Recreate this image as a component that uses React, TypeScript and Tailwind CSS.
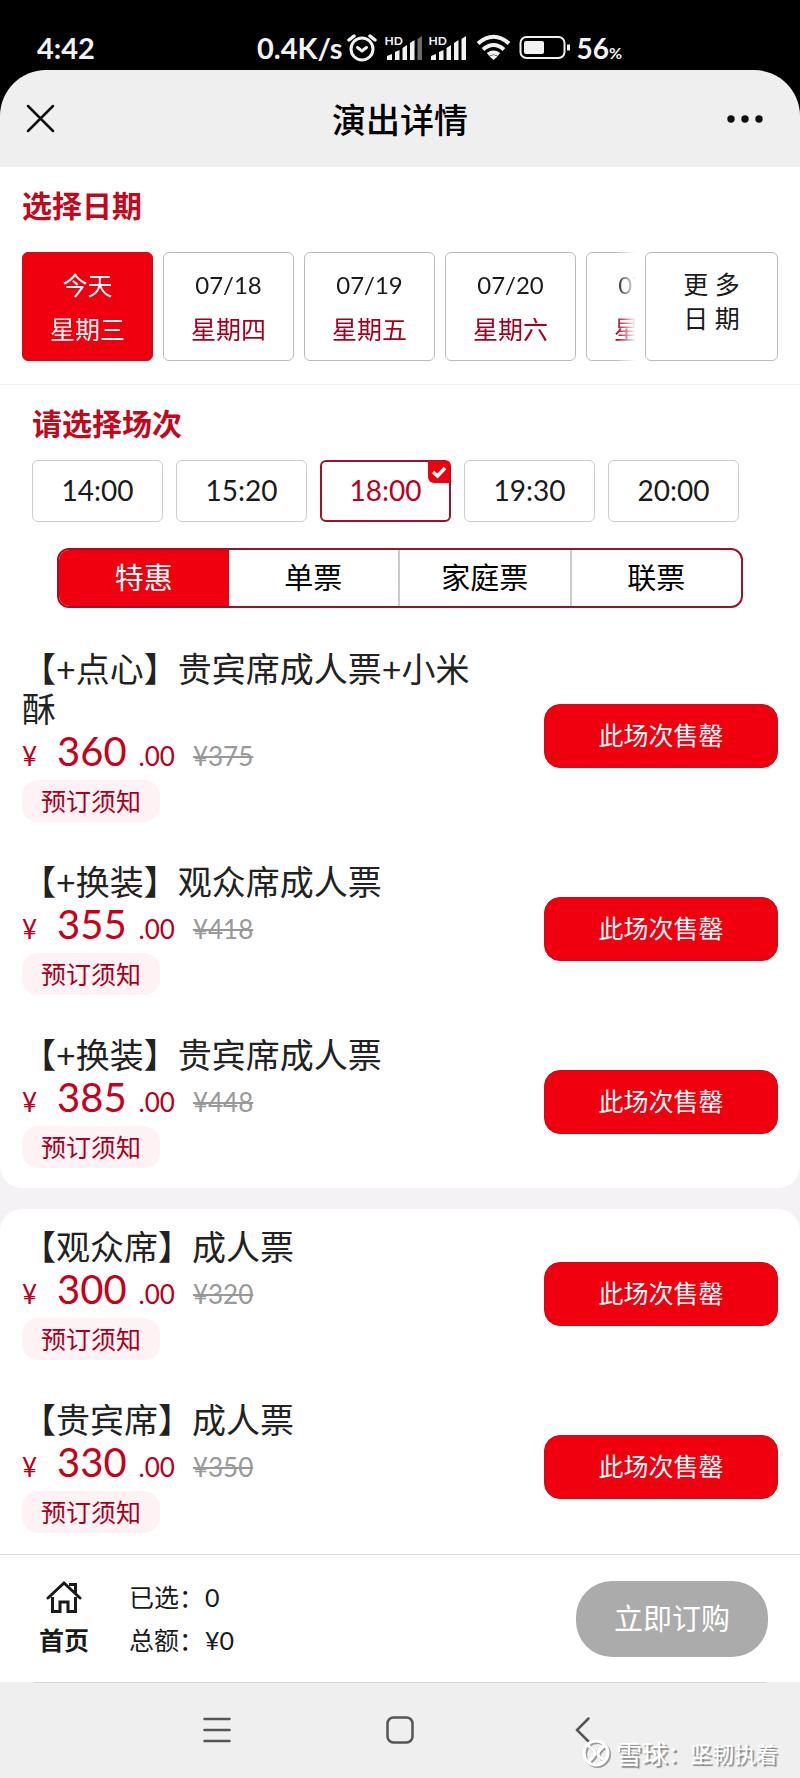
import React, { useState } from 'react';
import clsx from 'clsx';

const DATES = [
  { day: '今天', week: '星期三' },
  { day: '07/18', week: '星期四' },
  { day: '07/19', week: '星期五' },
  { day: '07/20', week: '星期六' },
  { day: '07/21', week: '星期日' },
];

const TIMES = ['14:00', '15:20', '18:00', '19:30', '20:00'];

const TABS = ['特惠', '单票', '家庭票', '联票'];

interface Ticket {
  name: string;
  price: number;
  original: number;
}

const GROUPS: Ticket[][] = [
  [
    { name: '【+点心】贵宾席成人票+小米酥', price: 360, original: 375 },
    { name: '【+换装】观众席成人票', price: 355, original: 418 },
    { name: '【+换装】贵宾席成人票', price: 385, original: 448 },
  ],
  [
    { name: '【观众席】成人票', price: 300, original: 320 },
    { name: '【贵宾席】成人票', price: 330, original: 350 },
  ],
];

const Signal: React.FC<{ weak?: boolean }> = ({ weak }) => (
  <div className="relative">
    <span className="absolute left-0 top-0 text-[12px] leading-[10px] font-bold">HD</span>
    <svg width="38" height="24" viewBox="0 0 38 24" fill="#f2f2f2">
      <path d="M2 20l5-2v6H2zM10 16l4.500-2v10H10zM17.500 12l4.500-3v15h-4.500zM25 7l4.500-3v20H25z" />
      <path d="M32.500 3L37 0v24h-4.500z" fill={weak ? '#6b6b6b' : '#f2f2f2'} />
    </svg>
  </div>
);

const StatusBar: React.FC = () => (
  <div className="h-[70px] pt-[34px] pl-[37px] flex items-start text-[#f2f2f2] text-[29px] leading-7 font-bold">
    <span className="w-[220px]">4:42</span>
    <span>0.4K/s</span>
    <svg className="ml-1 mr-2" width="30" height="28" viewBox="0 0 30 28" fill="none" stroke="#f2f2f2" strokeWidth="3" strokeLinecap="round">
      <circle cx="15" cy="15" r="11" />
      <path d="M2 6l5-4M28 6l-5-4" strokeWidth="3.500" />
      <path d="M10.500 13.500l4.500 3.500 4.500-3.500" strokeLinejoin="round" />
    </svg>
    <div className="flex items-start gap-[6px] pt-[2px]">
      <Signal weak />
      <Signal />
    </div>
    <svg className="ml-[9px] mr-2" width="35" height="28" viewBox="0 0 35 28" fill="none" stroke="#f2f2f2" strokeWidth="4">
      <path d="M2 9.500Q17.500-4 33 9.500M7 15.500q10.500-9 21 0M12 20.500q5.500-4 11 0" />
      <path d="M13.500 22.500q4-3 8 0l-4 3.500z" fill="#f2f2f2" stroke="none" />
    </svg>
    <svg className="mr-[6px]" width="52" height="28" viewBox="0 0 52 28" fill="none" stroke="#f2f2f2" strokeWidth="2">
      <rect x="1.500" y="3" width="44" height="21" rx="6" />
      <rect x="5" y="7" width="20" height="13" rx="2" fill="#f2f2f2" stroke="none" />
      <path d="M49.500 10.500v6" strokeWidth="3" />
    </svg>
    <span className="text-[28px]">
      56<span className="text-[16px]">%</span>
    </span>
  </div>
);

const TicketRow: React.FC<{ ticket: Ticket }> = ({ ticket }) => (
  <li className="flex items-center gap-14">
    <div className="flex-1 flex flex-col items-start">
      <h3 className="text-[34px] leading-10 text-[#222]">{ticket.name}</h3>
      <p className="h-[51px] flex items-baseline text-[26px] leading-[44px] text-[#b8001c]">
        <span className="w-[35px]">¥</span>
        <span className="text-[40px] text-[#c8001a]">{ticket.price}</span>
        <span className="ml-3">.00</span>
        <del className="ml-[18px] text-[#999]">¥{ticket.original}</del>
      </p>
      <button className="h-[42px] px-[19px] rounded-2xl bg-[#fff2f5] text-[#a8001c] text-[25px] leading-10">
        预订须知
      </button>
    </div>
    <button className="w-[234px] h-16 rounded-2xl bg-[#f0000f] border border-[#c4101c] text-white text-[25px]">
      此场次售罄
    </button>
  </li>
);

const App: React.FC = () => {
  const [date, setDate] = useState(0);
  const [time, setTime] = useState('18:00');
  const [tab, setTab] = useState('特惠');

  return (
    <div className="bg-black font-['Lato','Noto_Sans_CJK_SC',sans-serif] text-[#1a1a1a]">
      <StatusBar />

      {/* Title bar */}
      <header className="h-[97px] px-[26px] flex items-center justify-between rounded-t-[46px] bg-[#efefef]">
        <button aria-label="关闭" className="w-[58px]">
          <svg width="30" height="30" viewBox="0 0 30 30" fill="none" stroke="#111" strokeWidth="2.500" strokeLinecap="round">
            <path d="M2 2l25 25M27 2L2 27" />
          </svg>
        </button>
        <h1 className="pt-[2px] text-[34px] leading-[48px] font-medium text-black">演出详情</h1>
        <button aria-label="更多" className="w-[58px] flex justify-center">
          <svg width="38" height="10" viewBox="0 0 38 10" fill="#111">
            <circle cx="5" cy="5" r="3.700" />
            <circle cx="19" cy="5" r="3.700" />
            <circle cx="33" cy="5" r="3.700" />
          </svg>
        </button>
      </header>

      <main className="bg-[#f5f2f5]">
        <section className="bg-white px-[22px] pt-[18px] pb-[23px] border-b border-[#f0f0f0]">
          <h2 className="text-[30px] leading-10 font-bold text-[#c4081c]">选择日期</h2>
          <div className="mt-[27px] flex gap-[5px]">
            <div className="flex-1 min-w-0 flex gap-[10px] overflow-hidden [mask-image:linear-gradient(to_right,black_calc(100%-24px),transparent_calc(100%-4px))]">
              {DATES.map((d, i) => (
                <button
                  key={d.day}
                  onClick={() => setDate(i)}
                  className={clsx(
                    'shrink-0 w-[131px] h-[109px] rounded-md border flex flex-col items-center justify-center gap-1 text-[25px] leading-10',
                    i === date ? 'bg-[#f0000f] border-[#c4101c] text-white' : 'bg-white border-[#bbb]'
                  )}
                >
                  <span className={clsx(i > 0 && 'text-[24px]')}>{d.day}</span>
                  <span className={clsx(i !== date && 'text-[#a8001c]')}>{d.week}</span>
                </button>
              ))}
            </div>
            <button className="w-[133px] h-[109px] rounded-md border border-[#bbb] pb-3 text-[25px] leading-[34px]">
              更 多
              <br />
              日 期
            </button>
          </div>
        </section>

        <section className="bg-white rounded-b-[22px] pt-[18px] pb-5">
          <h2 className="px-8 text-[30px] leading-10 font-bold text-[#c4081c]">请选择场次</h2>
          <div className="mt-[17px] px-8 flex gap-[13px]">
            {TIMES.map((t) => (
              <button
                key={t}
                onClick={() => setTime(t)}
                className={clsx(
                  'relative w-[131px] h-[62px] rounded-md pb-[2px] text-[28px] leading-10',
                  t === time ? 'border-2 border-[#a0102a] text-[#b8001c]' : 'border border-[#ccc]'
                )}
              >
                {t}
                {t === time && (
                  <span className="absolute -right-px -top-px size-[22px] rounded-tr-sm rounded-bl-md bg-[#f0000f] flex items-center justify-center">
                    <svg width="16" height="14" viewBox="0 0 16 14" fill="none" stroke="white" strokeWidth="3.500">
                      <path d="M2 7l4.500 4L14 3" />
                    </svg>
                  </span>
                )}
              </button>
            ))}
          </div>

          <div role="tablist" className="mt-[26px] mx-[57px] h-[60px] flex rounded-xl border-2 border-[#a0102a] overflow-hidden">
            {TABS.map((name, i) => (
              <button
                key={name}
                role="tab"
                aria-selected={name === tab}
                onClick={() => setTab(name)}
                className={clsx(
                  'flex-1 text-[29px] leading-10',
                  name === tab ? 'bg-[#f0000f] text-white' : 'text-black',
                  i > 1 && 'border-l-2 border-[#ccc]'
                )}
              >
                {name}
              </button>
            ))}
          </div>

          <ul className="mt-[41px] px-[22px] flex flex-col gap-10">
            {GROUPS[0].map((ticket) => (
              <TicketRow key={ticket.name} ticket={ticket} />
            ))}
          </ul>
        </section>

        <section className="mt-[21px] bg-white rounded-t-[22px] pt-[18px] pb-[21px]">
          <ul className="px-[22px] flex flex-col gap-10">
            {GROUPS[1].map((ticket) => (
              <TicketRow key={ticket.name} ticket={ticket} />
            ))}
          </ul>
        </section>
      </main>

      {/* Order bar */}
      <footer className="h-32 pl-[39px] pr-8 flex items-center bg-white border-t border-[#ddd]">
        <a href="#home" className="flex flex-col items-center gap-2 text-[25px] leading-9 font-bold">
          <svg width="36" height="34" viewBox="0 0 36 34" fill="none" stroke="#1a1a1a" strokeWidth="3">
            <path d="M2 18L18 3l16 15" strokeLinecap="round" />
            <path d="M6.500 17v14.500H14V22h8v9.500h7.500V17M23 4.500h6.500V13" />
          </svg>
          首页
        </a>
        <dl className="ml-10 grid grid-cols-[76px_auto] text-[25px] leading-[43px]">
          <dt>已选：</dt>
          <dd>0</dd>
          <dt>总额：</dt>
          <dd>¥0</dd>
        </dl>
        <button className="ml-auto w-48 h-[76px] rounded-[36px] bg-[#ababab] text-white text-[29px]">立即订购</button>
      </footer>

      {/* System navigation */}
      <nav className="relative h-24 bg-[#efefef]">
        <div className="mx-[34px] h-px bg-[#d5d5d5]" />
        <div className="px-[203px] pt-[33px] flex items-center justify-between">
          <button aria-label="菜单">
            <svg width="28" height="28" viewBox="0 0 28 28" stroke="#555" strokeWidth="2.500" strokeLinecap="round">
              <path d="M1.500 3h25M1.500 14h25M1.500 25h25" />
            </svg>
          </button>
          <button aria-label="主屏幕">
            <svg width="28" height="28" viewBox="0 0 28 28" fill="none" stroke="#555" strokeWidth="2.500">
              <rect x="1.500" y="1.500" width="25" height="25" rx="6" />
            </svg>
          </button>
          <button aria-label="返回">
            <svg width="28" height="28" viewBox="0 0 28 28" fill="none" stroke="#555" strokeWidth="2.500" strokeLinecap="round">
              <path d="M19.500 2.500L8 14l11.500 11.500" />
            </svg>
          </button>
        </div>
        <div className="absolute right-[22px] bottom-2 flex items-center text-white text-[26px] leading-8 [text-shadow:2px_2px_1px_#888]">
          <svg className="mr-1" width="30" height="30" viewBox="0 0 30 30" fill="none" strokeWidth="3">
            <g stroke="#999" transform="translate(1.500 1.500)">
              <circle cx="14" cy="14" r="12" />
              <path d="M5 6q8 5 8 8t-6 8M22 7q-5 4-6 7t6 7" />
            </g>
            <g stroke="white">
              <circle cx="14" cy="14" r="12" />
              <path d="M5 6q8 5 8 8t-6 8M22 7q-5 4-6 7t6 7" />
            </g>
          </svg>
          雪球
          <span className="text-[22px]">：坚韧执着</span>
        </div>
      </nav>
    </div>
  );
};

export default App;
